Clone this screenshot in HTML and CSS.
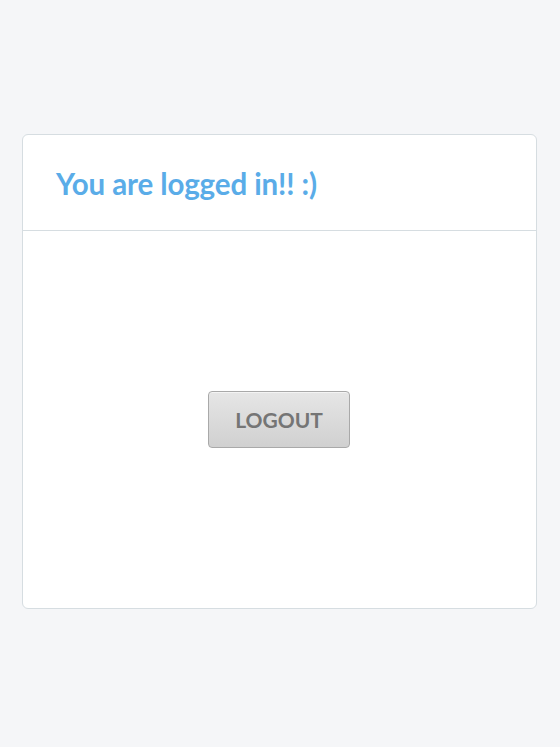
FILE: index.html
```html
<!DOCTYPE html>
<html>
<head>
<meta charset="utf-8">
<link rel="stylesheet" href="styles.css">
</head>
<body>
<div class="page">
  <div class="card">
    <div class="card-header">
      <h1 class="title">You are logged in!! :)</h1>
    </div>
    <div class="card-body">
      <button class="btn">LOGOUT</button>
    </div>
  </div>
</div>
</body>
</html>
```
FILE: styles.css
```css
html, body {
  margin: 0;
  padding: 0;
  background: #f5f6f8;
  font-family: Lato, "Open Sans", sans-serif;
}
.page {
  padding: 134px 23px 0 22px;
}
.card {
  background: #fff;
  border: 1px solid #d6dde1;
  border-radius: 6px;
  height: 475px;
  display: flex;
  flex-direction: column;
  box-sizing: border-box;
}
.card-header {
  height: 95px;
  border-bottom: 1px solid #d6dde1;
  display: flex;
  align-items: center;
  padding: 0 33px;
  flex-shrink: 0;
}
.title {
  margin: 0;
  padding-top: 1px;
  font-size: 29.5px;
  font-weight: 700;
  color: #5aace8;
  letter-spacing: -0.1px;
}
.card-body {
  flex: 1;
  display: flex;
  align-items: center;
  justify-content: center;
  padding-right: 1px;
}
.btn {
  width: 142px;
  height: 57px;
  border: 1px solid #a9a9a9;
  border-radius: 4px;
  background: linear-gradient(#e6e6e6, #d0d0d0);
  color: #757575;
  font-family: Lato, sans-serif;
  font-weight: 700;
  font-size: 21px;
  box-shadow: inset 0 1px 0 #f4f4f4;
  padding: 0;
}
```
